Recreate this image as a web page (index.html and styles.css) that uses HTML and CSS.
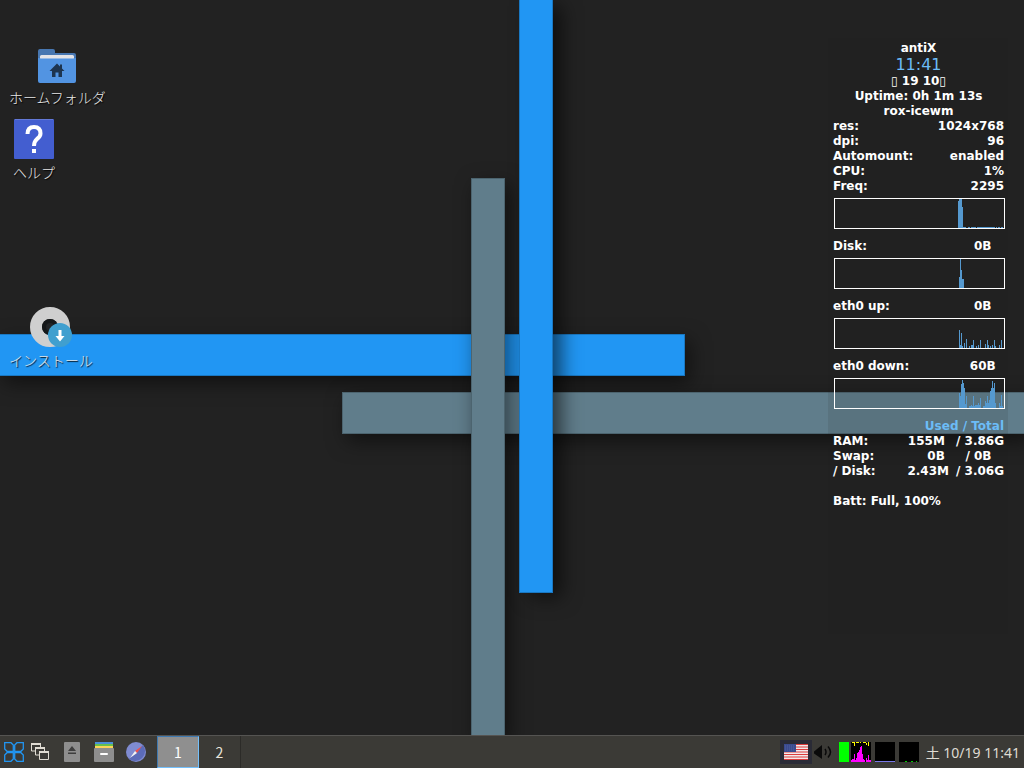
FILE: index.html
```html
<!DOCTYPE html>
<html lang="ja">
  <head>
    <meta charset="utf-8">
    <title>antiX</title>
    <link rel="stylesheet" href="styles.css">
  </head>
  <body>
    <main class="desktop">
      <!-- wallpaper stripes -->
      <div class="wallpaper">
        <div class="stripe blue-row"></div>
        <div class="stripe grey-row"></div>
        <div class="stripe grey-col"></div>
        <div class="stripe blue-col"></div>
      </div>

      <!-- desktop icons -->
      <a href="#home" class="shortcut home">
        <svg width="38" height="36" viewBox="0 0 38 36">
          <path d="M0 3q0-2 2-2h13q2 0 2 2v2h19q2 0 2 2v14H0z" fill="#4877b1"/>
          <path d="M2 12V8.500q0-1.500 1.500-1.500h31q1.500 0 1.500 1.500V12z" fill="#e4e4e8"/>
          <path d="M0 10q2 0 3 .5h32q1-.5 3-.5v23q0 2-2 2H2q-2 0-2-2z" fill="#5294e2"/>
          <path d="M19 15.500l-7.500 7.500H14V29h3.500v-4.500h3V29H24v-6h2.500L24 20.500v-4h-2v2z" fill="#1d344f"/>
        </svg>
        <span>ホームフォルダ</span>
      </a>
      <a href="#help" class="shortcut help">
        <svg width="40" height="40" viewBox="0 0 40 40">
          <rect width="40" height="40" rx="1" fill="#435ed0"/>
          <path d="M1 .5h38" stroke="#6379d7"/>
          <path d="M13.500 15q0-7 6.500-7t6.500 6.500q0 3-3.500 5.500-3 2.500-3 7" fill="none" stroke="#fff" stroke-width="4"/>
          <rect x="18" y="30" width="4" height="4" fill="#fff"/>
        </svg>
        <span>ヘルプ</span>
      </a>
      <a href="#install" class="shortcut install">
        <svg width="42" height="40" viewBox="0 0 42 40">
          <circle cx="20" cy="20" r="14" fill="none" stroke="#cfcfcf" stroke-width="12"/>
          <circle cx="20" cy="20" r="8" fill="#15181a"/>
          <circle cx="20" cy="20" r="4" fill="#222527"/>
          <circle cx="30" cy="28" r="12" fill="#409fcf"/>
          <path d="M28.500 23h3v6h3L30 34.500 25.500 29h3z" fill="#fff"/>
        </svg>
        <span>インストール</span>
      </a>

      <!-- system monitor -->
      <aside class="monitor">
        <div class="center">antiX</div>
        <div class="center time">11:41</div>
        <div class="center">▯ 19 10▯</div>
        <div class="center">Uptime: 0h 1m 13s</div>
        <div class="center">rox-icewm</div>
        <div class="line"><span>res:</span><span>1024x768</span></div>
        <div class="line"><span>dpi:</span><span>96</span></div>
        <div class="line"><span>Automount:</span><span>enabled</span></div>
        <div class="line"><span>CPU:</span><span>1%</span></div>
        <div class="line"><span>Freq:</span><span>2295</span></div>
        <svg class="graph" viewBox="0 0 169 29">
          <path d="M123 29V2h1V0h3v8h1v20h3v1zM133 28h2v1h-2zM136 28h5v1h-5zM142 28h18v1h-18zM161 28h1v1h-1zM163 28h2v1h-2zM166 28h2v1h-2z"/>
        </svg>
        <div class="line"><span>Disk:</span><span>0B&nbsp;&nbsp;&nbsp;</span></div>
        <svg class="graph" viewBox="0 0 169 29">
          <path d="M124 29V18h1V0h1v11h1v9h2v9z"/>
        </svg>
        <div class="line"><span>eth0 up:</span><span>0B&nbsp;&nbsp;&nbsp;</span></div>
        <svg class="graph" viewBox="0 0 169 29">
          <path d="M124 29V11h1v15h1V14h1v13h1v2zM129 24h1v5h-1zM131 20h1v9h-1zM134 27h1v2h-1zM136 29v-3h2v-5h1v8zM141 27h1v2h-1zM143 26h1v3h-1zM145 21h1v8h-1zM150 25h1v4h-1zM152 21h1v5h1v3h-2zM155 27h1v2h-1zM157 26h1v3h-1zM159 21h1v6h1v2h-2zM164 26h1v3h-1zM166 21h1v8h-1z"/>
        </svg>
        <div class="line"><span>eth0 down:</span><span>60B&nbsp;&nbsp;</span></div>
        <svg class="graph" viewBox="0 0 169 29">
          <path d="M124 29V14h1v3h1V5h1V1h1v3h1v5h1v16h1v-8h1v12zM134 27h2v-1h1v1h1V17h1v10h1v-1h3v-2h1v2h1v-7h1v10h-12zM148 27h2v-5h1v2h1v-7h1v7h1v-3h1v-9h1V9h1V2h1v7h1V4h1v20h1v5h-13zM164 24h1v3h1V16h1v11h1v2h-4z"/>
        </svg>
        <table class="usage">
          <thead>
            <tr><th colspan="3">Used / Total</th></tr>
          </thead>
          <tbody>
            <tr><td>RAM:</td><td>155M&nbsp;</td><td>/ 3.86G</td></tr>
            <tr><td>Swap:</td><td>0B&nbsp;</td><td>/ 0B&nbsp;&nbsp;&nbsp;</td></tr>
            <tr><td>/ Disk:</td><td>2.43M</td><td>/ 3.06G</td></tr>
          </tbody>
        </table>
        <div class="battery">Batt: Full, 100%</div>
      </aside>
    </main>

    <footer class="taskbar">
      <nav class="launchers">
        <button aria-label="Menu">
          <svg width="20" height="20" viewBox="0 0 20 20" fill="none" stroke="#2196f3" stroke-width="1.300">
            <path d="M.7.700H7L9.300 3v6.300H3L.7 7zM19.300.700H13L10.700 3v6.300H17L19.300 7zM.7 19.300H7L9.300 17v-6.300H3L.7 13zM19.300 19.300H13L10.700 17v-6.300H17l2.300 2.300z"/>
          </svg>
        </button>
        <button aria-label="Windows">
          <svg width="18" height="18" viewBox="0 0 18 18" fill="#3b3a36" stroke="#dfdbd2">
            <path d="M.5 1h9v7h-9z"/>
            <path d="M0 1h10" stroke-width="2"/>
            <path d="M4.500 5h9v7h-9z"/>
            <path d="M4 5h10" stroke-width="2"/>
            <path d="M8.500 9h9v7.500h-9z"/>
            <path d="M8 9h10" stroke-width="2"/>
          </svg>
        </button>
        <button aria-label="Eject">
          <svg width="16" height="20" viewBox="0 0 16 20">
            <rect width="16" height="20" rx="1" fill="#8e8e8e"/>
            <path d="M8 4l4 5H4zM4 10.500h8v1.500H4z" fill="#3e3e3e"/>
          </svg>
        </button>
        <button aria-label="Files">
          <svg width="20" height="20" viewBox="0 0 20 20">
            <path d="M1 0h18v2H1z" fill="#4a8fd9"/>
            <path d="M1 2h18v2H1z" fill="#68c04c"/>
            <path d="M1 4h18v2H1z" fill="#fcd558"/>
            <rect y="6" width="20" height="14" rx="1" fill="#8e8e8e"/>
            <rect x="6" y="11" width="8" height="2" rx="1" fill="#fff"/>
          </svg>
        </button>
        <button aria-label="Browser">
          <svg width="20" height="20" viewBox="0 0 20 20">
            <circle cx="10" cy="10" r="10" fill="#7f8bd0"/>
            <path d="M17 3A10 10 0 0 1 3 17z" fill="#5c6bb8"/>
            <path d="M16 4l-5 7-2-2z" fill="#f0504a"/>
            <path d="M4 16l5-7 2 2z" fill="#f4f4f4"/>
          </svg>
        </button>
      </nav>
      <div class="workspaces">
        <button class="active">1</button>
        <button>2</button>
      </div>
      <div class="tray">
        <button class="flag" aria-label="Keyboard layout">
          <svg width="24" height="16" viewBox="0 0 24 16">
            <path d="M0 0h24v16H0z" fill="#f3e9ea"/>
            <path d="M0 .5h24M0 3h24M0 5.500h24M0 8h24M0 10.500h24M0 13h24M0 15.500h24" stroke="#dc3c3c" stroke-width="1.200"/>
            <path d="M0 0h12v8H0z" fill="#3a4a8e"/>
            <path d="M1 2h10M1 4h10M1 6h10" stroke="#5060a0" stroke-dasharray="1 1"/>
          </svg>
        </button>
        <button class="volume" aria-label="Volume">
          <svg width="20" height="16" viewBox="0 0 20 16">
            <path d="M1 7.500L9 1v14L1 9.500z" fill="#0a0a0a"/>
            <path d="M12 5q2 3 0 6M15 2.500q5 5.500 0 11" fill="none" stroke="#0a0a0a" stroke-width="1.500"/>
          </svg>
        </button>
        <svg class="mem" width="10" height="20"><path d="M0 0h10v20H0z" fill="#0f0"/></svg>
        <svg class="meter" width="20" height="20" viewBox="0 0 20 20">
          <path d="M1 0h2v1H1zM3 0h1v4H3zM5 0h3v1H5zM9 0h1v1H9zM12 0h3v1h-3zM15 1h1v2h-1zM17 0h1v4h-1z" fill="#ff0"/>
          <path d="M0 20v-2h1v-1h2v-5h1v6h1v-2h1v-5h1v-1h1V8h1V5h1V4h1v8h1v5h1v1h1v2zM15 20v-4h1v2h1v-5h1v5h2v2z" fill="#f0f"/>
        </svg>
        <svg class="meter" width="20" height="20" viewBox="0 0 20 20"><path d="M0 19h20v1H0z" fill="#7777e8"/></svg>
        <svg class="meter" width="20" height="20" viewBox="0 0 20 20"><path d="M6 19h2v1H6zM12 19h2v1h-2zM17 19h1v1h-1z" fill="#0c0"/></svg>
        <time>土 10/19 11:41</time>
      </div>
    </footer>
  </body>
</html>
```

FILE: styles.css
```css
* {
  margin: 0;
  padding: 0;
  box-sizing: border-box;
}

body {
  display: flex;
  flex-direction: column;
  height: 100vh;
  overflow: hidden;
  background-color: #222222;
  color: white;
}

button {
  border: none;
  background: none;
  color: inherit;
  font: inherit;
  cursor: pointer;
}

svg {
  display: block;
}

.desktop {
  position: relative;
  flex: 1;
  display: flex;
  justify-content: flex-end;
  align-items: flex-start;
}

/* wallpaper */
.wallpaper {
  position: absolute;
  inset: 0;
  overflow: hidden;
}

.stripe {
  position: absolute;
  border: 1px solid rgba(0, 0, 0, 0.2);
  box-shadow: 5px 7px 20px 0 rgba(0, 0, 0, 0.5);
}

.blue-row {
  left: -2px;
  top: 334px;
  width: 687px;
  height: 42px;
  background-color: #2196f3;
}

.grey-row {
  left: 342px;
  right: -2px;
  top: 392px;
  height: 42px;
  background-color: #607d8b;
}

.grey-col {
  left: 471px;
  top: 178px;
  bottom: -2px;
  width: 34px;
  background-color: #607d8b;
}

.blue-col {
  left: 519px;
  top: -2px;
  width: 34px;
  height: 595px;
  background-color: #2196f3;
  /* no shadow to the left, it stays off the grey column */
  box-shadow: 10px 6px 20px -2px rgba(0, 0, 0, 0.6);
}

/* shortcuts */
.shortcut {
  position: absolute;
  display: flex;
  flex-direction: column;
  align-items: center;
  gap: 3px;
  color: #e8e8e8;
  font-family: "Noto Sans CJK JP", sans-serif;
  font-size: 14px;
  font-weight: 300;
  line-height: 20px;
  text-decoration: none;
  text-shadow: 1px 1px 1px black;
  white-space: nowrap;
}

.home {
  left: 9px;
  top: 48px;
}

.help {
  left: 13px;
  top: 119px;
}

.install {
  left: 9px;
  top: 307px;
}

/* system monitor */
.monitor {
  position: relative;
  width: 180px;
  height: 596px;
  margin: 38px 16px 0 0;
  padding: 3px 4px 0 5px;
  background-color: rgba(32, 32, 32, 0.1);
  font-family: "DejaVu Sans", sans-serif;
  font-size: 12px;
  font-weight: bold;
  line-height: 15px;
}

.center {
  text-align: center;
}

.time {
  color: #6cbcf7;
  font-size: 16px;
  font-weight: normal;
  line-height: 18px;
}

.line {
  display: flex;
  justify-content: space-between;
}

.graph {
  width: 171px;
  height: 31px;
  margin: 4px 0 10px 1px;
  border: 1px solid white;
  fill: #5599cf;
  shape-rendering: crispEdges;
}

.usage {
  width: 100%;
  border-collapse: collapse;
}

.usage th {
  color: #6cbcf7;
  text-align: right;
}

.usage td {
  text-align: right;
}

.usage td:first-child {
  text-align: left;
}

.usage td:last-child {
  width: 55px;
}

.battery {
  margin-top: 15px;
}

/* taskbar */
.taskbar {
  position: relative;
  display: flex;
  height: 33px;
  border-top: 1px solid #555452;
  background-color: #3b3a36;
  font-family: "Noto Sans", "Noto Sans CJK JP", sans-serif;
  font-size: 14px;
}

.launchers {
  display: flex;
  align-items: center;
  width: 157px;
  padding-left: 4px;
}

.launchers button {
  display: flex;
  justify-content: center;
  width: 32px;
}

.launchers button:first-child {
  width: 20px;
}

.workspaces {
  display: flex;
  font-family: "Noto Sans CJK JP", sans-serif;
}

.workspaces button {
  width: 42px;
  border-right: 1px solid #2c2b28;
  color: #e8e4dc;
}

.workspaces .active {
  border: 1px solid #3f79b0;
  border-right-color: #74c0fc;
  border-bottom-color: #74c0fc;
  background-color: #8f8f8f;
  color: white;
}

.tray {
  display: flex;
  align-items: center;
  gap: 4px;
  margin-left: auto;
  padding-right: 4px;
}

.flag {
  padding: 4px;
  background-color: #2a2b36;
}

.volume {
  margin: 0 2px 0 -3px;
}

.mem {
  margin-right: -2px;
}

.meter {
  background-color: black;
  shape-rendering: crispEdges;
}

.tray time {
  margin-left: 3px;
  color: #dfdbd2;
}
```
